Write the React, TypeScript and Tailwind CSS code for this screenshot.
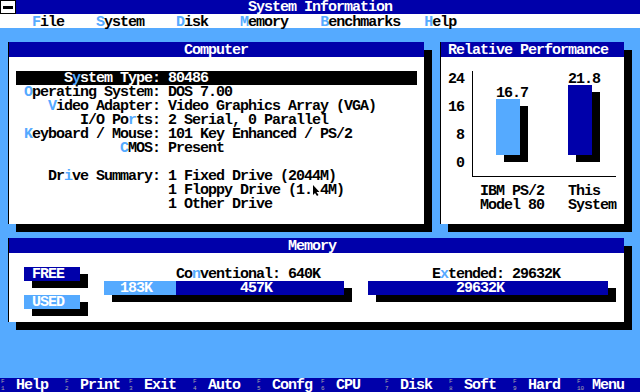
import React from 'react';

const HL: React.FC<{ children: React.ReactNode }> = ({ children }) => (
  <span className="text-[#55aaff]">{children}</span>
);

const Row = 'h-[14px] pt-[2px] leading-[12px]';

const Panel: React.FC<{
  title: string;
  titleClass: string;
  className: string;
  children: React.ReactNode;
}> = ({ title, titleClass, className, children }) => (
  <div className={`bg-white border-l border-black shadow-[8px_8px_0_0_#000] overflow-hidden ${className}`}>
    <div className="h-[15px] pt-[1px] bg-[#0000aa] text-white">
      <div className={`${Row} ${titleClass}`}>{title}</div>
    </div>
    {children}
  </div>
);

const TitleBar = () => (
  <div className="flex h-[14px] bg-[#0000aa]">
    <div className="w-[16px] h-[14px] bg-white border border-black flex items-center justify-center">
      <div className="w-[10px] h-[3px] bg-black" />
    </div>
    <span className="ml-[232px] h-[14px] pt-[2px] text-white leading-[12px]">System Information</span>
  </div>
);

const MenuBar = () => (
  <div className="h-[14px] pt-[2px] bg-white text-black pl-[32px] leading-[13px]">
    <HL>F</HL>ile    <HL>S</HL>ystem    <HL>D</HL>isk    <HL>M</HL>emory    <HL>B</HL>enchmarks   <HL>H</HL>elp
  </div>
);

const Cursor = () => (
  <span className="inline-block w-[8px] h-[12px] align-top">
    <svg width="8" height="12" viewBox="0 2 8 12">
      <path d="M1 2 L1 12 L3 10 L5 13 L6.5 12 L4.5 9 L7.5 9 Z" fill="#000" />
    </svg>
  </span>
);

const computerRows: { label: React.ReactNode; value: React.ReactNode; selected?: boolean }[] = [
  { label: <>S<HL>y</HL>stem Type:</>, value: '80486', selected: true },
  { label: <><HL>O</HL>perating System:</>, value: 'DOS 7.00' },
  { label: <><HL>V</HL>ideo Adapter:</>, value: 'Video Graphics Array (VGA)' },
  { label: <>I/O Po<HL>r</HL>ts:</>, value: '2 Serial, 0 Parallel' },
  { label: <><HL>K</HL>eyboard / Mouse:</>, value: '101 Key Enhanced / PS/2' },
  { label: <><HL>C</HL>MOS:</>, value: 'Present' },
  { label: '', value: '' },
  { label: <>Dr<HL>i</HL>ve Summary:</>, value: '1 Fixed Drive (2044M)' },
  { label: '', value: <>1 Floppy Drive (1.<Cursor />4M)</> },
  { label: '', value: '1 Other Drive' },
];

const ComputerPanel = () => (
  <Panel title="Computer" titleClass="pl-[175px]" className="w-[416px] h-[182px]">
    <div className="mx-[7px] text-black">
      <div className="h-[14px]" />
      {computerRows.map((r, i) => (
        <div key={i} className={`flex ${Row} ${r.selected ? 'bg-black text-white' : ''}`}>
          <span className="w-[144px] text-right">{r.label}</span>
          <span className="pl-[8px]">{r.value}</span>
        </div>
      ))}
    </div>
  </Panel>
);

const PerfPanel = () => (
  <Panel title="Relative Performance" titleClass="pl-[7px]" className="w-[184px] h-[182px]">
    <svg width="183" height="167" viewBox="0 0 183 167" className="block">
      <g fontFamily="Liberation Mono, monospace" fontWeight="bold" fontSize="15" letterSpacing="-1" fill="#000">
        <text x="7" y="26">24</text>
        <text x="7" y="54">16</text>
        <text x="15" y="82">8</text>
        <text x="15" y="110">0</text>
        <text x="55" y="40">16.7</text>
        <text x="127" y="26">21.8</text>
        <text x="39" y="138">IBM PS/2</text>
        <text x="39" y="152">Model 80</text>
        <text x="127" y="138">This</text>
        <text x="127" y="152">System</text>
      </g>
      <line x1="31.5" y1="14" x2="31.5" y2="120" stroke="#000" strokeWidth="1" />
      <line x1="31" y1="119.5" x2="175" y2="119.5" stroke="#000" strokeWidth="1" />
      <rect x="63" y="49" width="24" height="56" fill="#000" />
      <rect x="55" y="42" width="24" height="56" fill="#55aaff" />
      <rect x="135" y="35" width="24" height="70" fill="#000" />
      <rect x="127" y="28" width="24" height="70" fill="#0000aa" />
    </svg>
  </Panel>
);

const MemoryPanel = () => (
  <Panel title="Memory" titleClass="pl-[279px]" className="ml-[8px] w-[616px] h-[84px]">
    <div className="h-[14px]" />
    <div className="flex text-black">
      <div className="ml-[15px] w-[56px] flex flex-col">
        <div className={`${Row} bg-[#0000aa] text-white pl-[8px] shadow-[8px_7px_0_0_#000]`}>FREE</div>
        <div className="h-[14px]" />
        <div className={`${Row} bg-[#55aaff] text-white pl-[8px] shadow-[8px_7px_0_0_#000]`}>USED</div>
      </div>
      <div className="ml-[24px] w-[240px]">
        <div className={`${Row} pl-[72px]`}>Co<HL>n</HL>ventional: 640K</div>
        <div className={`flex h-[14px] text-white shadow-[8px_7px_0_0_#000]`}>
          <div className={`${Row} w-[72px] bg-[#55aaff] pl-[16px]`}>183K</div>
          <div className={`${Row} flex-1 bg-[#0000aa] pl-[64px]`}>457K</div>
        </div>
      </div>
      <div className="ml-[24px] w-[240px]">
        <div className={`${Row} pl-[64px]`}>E<HL>x</HL>tended: 29632K</div>
        <div className={`${Row} bg-[#0000aa] text-white pl-[88px] shadow-[8px_7px_0_0_#000]`}>29632K</div>
      </div>
    </div>
  </Panel>
);

const fkeys = ['Help', 'Print', 'Exit', 'Auto', 'Confg', 'CPU', 'Disk', 'Soft', 'Hard', 'Menu'];

const FKeyBar = () => (
  <div className="flex h-[14px] bg-[#0000aa]">
    {fkeys.map((k, i) => (
      <div key={k} className="flex w-[64px] h-[14px]">
        <span className="w-[16px] h-[14px] flex flex-col pl-[1px] text-[6px] leading-[7px] font-normal tracking-normal text-[#aaaaaa]">
          <span>F</span>
          <span>{i + 1}</span>
        </span>
        <span className="h-[14px] pt-[2px] text-white leading-[12px]">{k}</span>
      </div>
    ))}
  </div>
);

export default function App() {
  return (
    <div className="w-[640px] h-[392px] overflow-hidden bg-[#55aaff] flex flex-col font-['Liberation_Mono',monospace] font-bold text-[15px] tracking-[-1px] whitespace-pre">
      <TitleBar />
      <MenuBar />
      <div className="h-[14px]" />
      <div className="flex h-[182px] pl-[8px] gap-[16px]">
        <ComputerPanel />
        <PerfPanel />
      </div>
      <div className="h-[14px]" />
      <MemoryPanel />
      <div className="flex-1" />
      <FKeyBar />
    </div>
  );
}
